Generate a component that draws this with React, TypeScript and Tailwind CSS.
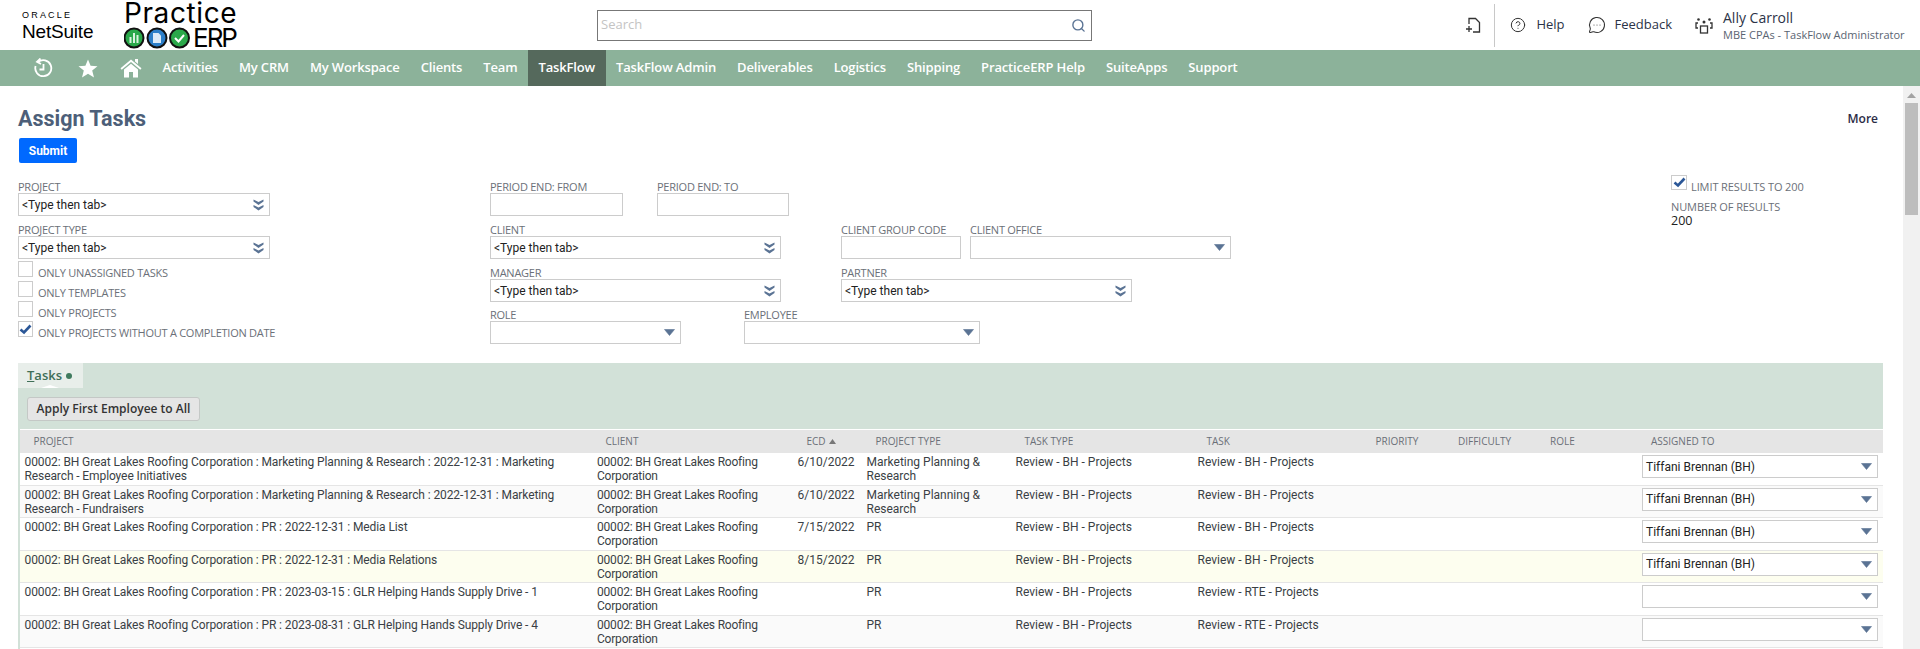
import { CircleHelp, MessageCircleMore, Search } from 'lucide-react'

const navItems = ['Activities', 'My CRM', 'My Workspace', 'Clients', 'Team', 'TaskFlow', 'TaskFlow Admin', 'Deliverables', 'Logistics', 'Shipping', 'PracticeERP Help', 'SuiteApps', 'Support']

const projectBase = '00002: BH Great Lakes Roofing Corporation : '
const rows = [
  { project: projectBase + 'Marketing Planning & Research : 2022-12-31 : Marketing Research - Employee Initiatives', ecd: '6/10/2022', type: 'Marketing Planning & Research', task: 'Review - BH - Projects', assigned: 'Tiffani Brennan (BH)', bg: 'bg-white' },
  { project: projectBase + 'Marketing Planning & Research : 2022-12-31 : Marketing Research - Fundraisers', ecd: '6/10/2022', type: 'Marketing Planning & Research', task: 'Review - BH - Projects', assigned: 'Tiffani Brennan (BH)', bg: 'bg-[#fafafa]' },
  { project: projectBase + 'PR : 2022-12-31 : Media List', ecd: '7/15/2022', type: 'PR', task: 'Review - BH - Projects', assigned: 'Tiffani Brennan (BH)', bg: 'bg-white' },
  { project: projectBase + 'PR : 2022-12-31 : Media Relations', ecd: '8/15/2022', type: 'PR', task: 'Review - BH - Projects', assigned: 'Tiffani Brennan (BH)', bg: 'bg-[#fdfeef]' },
  { project: projectBase + 'PR : 2023-03-15 : GLR Helping Hands Supply Drive - 1', ecd: '', type: 'PR', task: 'Review - RTE - Projects', assigned: '', bg: 'bg-white' },
  { project: projectBase + 'PR : 2023-08-31 : GLR Helping Hands Supply Drive - 4', ecd: '', type: 'PR', task: 'Review - RTE - Projects', assigned: '', bg: 'bg-[#fafafa]' },
]

const gridCols = 'grid grid-cols-[572px_201px_69px_149px_182px_169px_82.5px_92px_101px_245.5px]'

function DoubleArrow() {
  return (
    <svg width="11" height="12" viewBox="0 0 11 12" className="shrink-0" fill="#5a7394">
      <path d="M0.5 0.5 L5.5 3 L10.5 0.5 L10.5 2.5 L5.5 6 L0.5 2.5 Z" />
      <path d="M0.5 6 L5.5 8.5 L10.5 6 L10.5 8 L5.5 11.5 L0.5 8 Z" />
    </svg>
  )
}

function Arrow() {
  return (
    <svg width="11" height="7" viewBox="0 0 11 7" className="shrink-0" fill="#5a7394">
      <path d="M0.5 0.5 H10.5 L5.5 6.5 Z" stroke="#5a7394" strokeLinejoin="round" strokeWidth="0.6" />
    </svg>
  )
}

function Label({ children }: { children: string }) {
  return <div className="h-[13px] text-[11px] leading-[13px] tracking-[-0.25px] text-[#6b7078] whitespace-nowrap">{children}</div>
}

function TextField({ label, w }: { label: string; w: string }) {
  return (
    <div className={w}>
      <Label>{label}</Label>
      <div className="h-[23px] border border-[#cccccc] bg-white" />
    </div>
  )
}

function SelectField({ label, w, double }: { label: string; w: string; double?: boolean }) {
  return (
    <div className={w}>
      <Label>{label}</Label>
      <div className="h-[23px] border border-[#cccccc] bg-white flex items-center justify-between pl-[3px] pr-[5px] font-['Roboto',sans-serif] text-[12px] text-[#222222]">
        <span>{double ? '<Type then tab>' : ''}</span>
        {double ? <DoubleArrow /> : <Arrow />}
      </div>
    </div>
  )
}

function Check({ label, checked }: { label: string; checked?: boolean }) {
  return (
    <div className="h-5 flex items-start gap-[5px]">
      <div className="w-[15px] h-4 border border-[#cccccc] bg-white flex items-center justify-center">
        {checked && (
          <svg width="13" height="11" viewBox="0 0 13 11">
            <path d="M1.5 5.5 L5 8.5 L11.5 1.5" stroke="#2b5797" strokeWidth="2.6" fill="none" />
          </svg>
        )}
      </div>
      <span className="mt-[5px] text-[11px] leading-[14px] tracking-[-0.25px] text-[#6b7078] whitespace-nowrap">{label}</span>
    </div>
  )
}

function PracticeLogo() {
  return (
    <div className="ml-[31px] w-[112px] h-[50px] text-black font-['Inter',sans-serif] flex flex-col">
      <div className="h-[27px] text-[28px] leading-[27px] tracking-[0.6px] font-normal whitespace-nowrap">Practice</div>
      <div className="flex items-center h-[22px]">
        <svg width="69" height="22" viewBox="0 0 69 22" className="shrink-0">
          <circle cx="10" cy="11" r="9.5" fill="#2aa84a" stroke="#111" strokeWidth="2" />
          <rect x="5.5" y="10" width="2" height="6" fill="#d9f2df" />
          <rect x="9" y="6" width="2" height="10" fill="#d9f2df" />
          <rect x="12.5" y="8" width="2" height="8" fill="#d9f2df" />
          <circle cx="33" cy="11" r="9.5" fill="#2c7fc9" stroke="#111" strokeWidth="2" />
          <path d="M29 6 H34.5 L37 8.5 V16 H29 Z" fill="#dcebf8" />
          <circle cx="55.5" cy="11" r="9.5" fill="#2aa84a" stroke="#111" strokeWidth="2" />
          <path d="M51 11 L54.5 14.5 L60 8" stroke="#fff" strokeWidth="2" fill="none" />
        </svg>
        <span className="text-[26px] leading-[22px] tracking-[-2px] font-normal">ERP</span>
      </div>
    </div>
  )
}

function TopBar() {
  return (
    <div className="h-[50px] flex items-center bg-white">
      <div className="ml-[22px] w-[71px] mt-[2px] text-black font-['Liberation_Sans',sans-serif]">
        <div className="text-[9px] leading-[9px] tracking-[2.2px]">ORACLE</div>
        <div className="mt-[2px] text-[19px] leading-[20px] tracking-[-0.2px]">NetSuite</div>
      </div>
      <PracticeLogo />
      <div className="ml-[361px] w-[495px] h-[31px] border border-[#777777] flex items-center justify-between pl-[3px] pr-[5px]">
        <span className="text-[13px] text-[#c4c4c4]">Search</span>
        <Search size={15} color="#5a7394" strokeWidth={2.2} />
      </div>
      <div className="ml-auto flex items-center h-[50px] text-[#2b3347]">
        <svg width="16" height="17" viewBox="0 0 16 17" fill="none" stroke="#333" strokeWidth="1.3">
          <path d="M4 7 V1.5 H10.5 L14.5 5.5 V15 H8" />
          <path d="M4 9 V15 M1 12 H7" />
        </svg>
        <div className="ml-[13px] w-px h-[43px] bg-[#c8c8c8]" />
        <CircleHelp className="ml-[15px]" size={16} strokeWidth={1.5} color="#333" />
        <span className="ml-[10px] text-[13px]">Help</span>
        <MessageCircleMore className="ml-[23px]" size={18} strokeWidth={1.4} color="#333" />
        <span className="ml-[9px] text-[13px]">Feedback</span>
        <svg className="ml-[23px]" width="18" height="17" viewBox="0 0 18 17" fill="none" stroke="#333" strokeWidth="1.3">
          <circle cx="3.5" cy="2.5" r="1.3" fill="#333" stroke="none" />
          <circle cx="9" cy="5" r="1.5" fill="#333" stroke="none" />
          <circle cx="14.5" cy="2.5" r="1.3" fill="#333" stroke="none" />
          <path d="M3 6 H1 V11 H3 M15 6 H17 V11 H15" />
          <rect x="5.5" y="9" width="7" height="7" />
        </svg>
        <div className="ml-[10px] w-[197px]">
          <div className="text-[14px] leading-[18px] text-[#2b3347]">Ally Carroll</div>
          <div className="text-[11px] leading-[15px] text-[#5a6472] whitespace-nowrap">MBE CPAs - TaskFlow Administrator</div>
        </div>
      </div>
    </div>
  )
}

function NavBar() {
  return (
    <div className="h-9 bg-[#8cb29a] flex items-center text-white">
      <svg className="ml-[33px]" width="20" height="20" viewBox="0 0 20 20" fill="none" stroke="#fff" strokeWidth="1.8">
        <path d="M5 4.2 A8 8 0 1 1 2.6 8" />
        <path d="M7.5 0.5 L4 3.8 L8 6" />
        <path d="M10.5 6 V11.5 H6.5" />
      </svg>
      <svg className="ml-[25px]" width="20" height="19" viewBox="0 0 20 19" fill="#fff">
        <path d="M10 0.5 L12.6 6.8 L19.5 7.2 L14.2 11.6 L16 18.5 L10 14.8 L4 18.5 L5.8 11.6 L0.5 7.2 L7.4 6.8 Z" />
      </svg>
      <svg className="ml-[22px]" width="22" height="20" viewBox="0 0 22 20" fill="#fff">
        <path d="M15 1 H18 V6 L15 3.5 Z" />
        <path d="M11 1.5 L21.5 10.2 L20.3 11.8 L11 4 L1.7 11.8 L0.5 10.2 Z" />
        <path d="M4 11.5 L11 5.8 L18 11.5 V19.5 H13 V14 H9 V19.5 H4 Z" />
      </svg>
      <div className="ml-[10px] flex h-full font-['Open_Sans',sans-serif] text-[13px] tracking-[-0.15px] font-semibold">
        {navItems.map((item) => (
          <div key={item} className={`flex items-center px-[10.5px] whitespace-nowrap ${item === 'TaskFlow' ? 'bg-[#55695c]' : ''}`}>
            {item}
          </div>
        ))}
      </div>
    </div>
  )
}

function FilterForm() {
  return (
    <div className="mt-[17px] flex">
      <div className="w-[252px] shrink-0 flex flex-col">
        <SelectField label="PROJECT" w="w-full" double />
        <div className="h-[7px]" />
        <SelectField label="PROJECT TYPE" w="w-full" double />
        <div className="h-[2px]" />
        <Check label="ONLY UNASSIGNED TASKS" />
        <Check label="ONLY TEMPLATES" />
        <Check label="ONLY PROJECTS" />
        <Check label="ONLY PROJECTS WITHOUT A COMPLETION DATE" checked />
      </div>
      <div className="ml-[220px] w-[741px] shrink-0 flex flex-col gap-[7px]">
        <div className="flex gap-[34px]">
          <TextField label="PERIOD END: FROM" w="w-[133px]" />
          <TextField label="PERIOD END: TO" w="w-[132px]" />
        </div>
        <div className="flex">
          <SelectField label="CLIENT" w="w-[291px]" double />
          <TextField label="CLIENT GROUP CODE" w="ml-[60px] w-[120px]" />
          <SelectField label="CLIENT OFFICE" w="ml-[9px] w-[261px]" />
        </div>
        <div className="flex">
          <SelectField label="MANAGER" w="w-[291px]" double />
          <SelectField label="PARTNER" w="ml-[60px] w-[291px]" double />
        </div>
        <div className="flex -mt-px">
          <SelectField label="ROLE" w="w-[191px]" />
          <SelectField label="EMPLOYEE" w="ml-[63px] w-[236px]" />
        </div>
      </div>
      <div className="ml-[440px] flex flex-col">
        <div className="-mt-[5px] flex items-start gap-[4px]">
          <div className="w-4 h-[15px] border border-[#cccccc] bg-white flex items-center justify-center">
            <svg width="13" height="11" viewBox="0 0 13 11">
              <path d="M1.5 5.5 L5 8.5 L11.5 1.5" stroke="#2b5797" strokeWidth="2.6" fill="none" />
            </svg>
          </div>
          <span className="mt-[5px] text-[11px] leading-[14px] tracking-[-0.1px] text-[#6b7078] whitespace-nowrap">LIMIT RESULTS TO 200</span>
        </div>
        <div className="mt-[6px] text-[11px] leading-[14px] tracking-[-0.1px] text-[#6b7078] whitespace-nowrap">NUMBER OF RESULTS</div>
        <div className="text-[12.5px] leading-[13px] text-[#222222]">200</div>
      </div>
    </div>
  )
}

function HeaderCell({ children }: { children?: React.ReactNode }) {
  return <div className="pl-[13.5px] text-[10px] text-[#6b7078] flex items-center gap-[3px]">{children}</div>
}

function TasksPanel() {
  return (
    <div className="mt-[19px] w-[1865px] bg-[#d2e1d8] pl-[2px] flex flex-col">
      <div className="-ml-[2px] relative w-[65px] h-[25px] bg-[#e8eeea] flex items-center pl-[9px] gap-[4px] font-['Open_Sans',sans-serif] text-[13px] font-semibold text-[#3f6f58]">
        <span><span className="underline">T</span>asks</span>
        <span className="w-[6px] h-[6px] rounded-full bg-[#3f7a5e]" />
        <div className="absolute left-[23px] bottom-0 w-0 h-0 border-x-[9px] border-x-transparent border-b-[3px] border-b-white" />
      </div>
      <div className="h-[41px] flex items-center pl-[7px]">
        <button className="w-[173px] h-6 bg-[#e5e5e5] border border-[#c4c8c6] rounded-[3px] text-[12px] font-semibold text-[#333333] font-['Open_Sans',sans-serif]">
          Apply First Employee to All
        </button>
      </div>
      <div className="border-t border-white bg-white">
        <div className={`${gridCols} h-[23px] bg-[#e5e5e5]`}>
          <HeaderCell>PROJECT</HeaderCell>
          <HeaderCell>CLIENT</HeaderCell>
          <HeaderCell>
            ECD
            <svg width="7" height="5" viewBox="0 0 7 5" fill="#777"><path d="M3.5 0 L7 5 H0 Z" /></svg>
          </HeaderCell>
          <HeaderCell>PROJECT TYPE</HeaderCell>
          <HeaderCell>TASK TYPE</HeaderCell>
          <HeaderCell>TASK</HeaderCell>
          <HeaderCell>PRIORITY</HeaderCell>
          <HeaderCell>DIFFICULTY</HeaderCell>
          <HeaderCell>ROLE</HeaderCell>
          <HeaderCell>ASSIGNED TO</HeaderCell>
        </div>
        {rows.map((row, i) => (
          <div key={i} className={`${gridCols} h-[32.5px] ${row.bg} border-b border-[#e5e5e5] font-['Roboto',sans-serif] text-[12px] leading-[14px] text-[#3a3f45] overflow-hidden`}>
            <div className="pl-[4.5px] pr-4 pt-[2px] tracking-[-0.1px]">{row.project}</div>
            <div className="pl-[5px] pr-4 pt-[2px] tracking-[-0.2px]">00002: BH Great Lakes Roofing Corporation</div>
            <div className="pl-[4.5px] pt-[2px]">{row.ecd}</div>
            <div className="pl-[4.5px] pr-4 pt-[2px]">{row.type}</div>
            <div className="pl-[4.5px] pt-[2px]">Review - BH - Projects</div>
            <div className="pl-[4.5px] pt-[2px]">{row.task}</div>
            <div />
            <div />
            <div />
            <div className="pl-[4.5px] pr-[5px] pt-[2px]">
              <div className="h-[23px] border border-[#cccccc] bg-white flex items-center justify-between pl-[3px] pr-[5px] text-[#222222]">
                <span>{row.assigned}</span>
                <Arrow />
              </div>
            </div>
          </div>
        ))}
        <div className="h-[32.5px] bg-white" />
      </div>
    </div>
  )
}

export default function App() {
  return (
    <div className="h-[649px] w-[1920px] overflow-hidden bg-white font-['Open_Sans',sans-serif]">
      <TopBar />
      <NavBar />
      <div className="flex h-[563px]">
        <div className="w-[1903px] shrink-0 pl-[18px] pt-[21px] overflow-hidden">
          <div className="flex items-start justify-between pr-[25px]">
            <div className="font-['Roboto',sans-serif] text-[21.5px] leading-[24px] font-bold text-[#4d5f79]">Assign Tasks</div>
            <div className="mt-[4px] text-[12px] leading-[16px] font-semibold text-[#2b2b45]">More</div>
          </div>
          <button className="mt-[7px] ml-px block w-[58px] h-[25px] rounded-[2px] bg-[#0069ff] text-white text-[12px] font-bold font-['Roboto',sans-serif]">Submit</button>
          <FilterForm />
          <TasksPanel />
        </div>
        <div className="w-[17px] shrink-0 bg-[#f1f1f1] flex flex-col items-center">
          <svg className="mt-[7px]" width="9" height="5" viewBox="0 0 9 5" fill="#a3a3a3"><path d="M4.5 0 L9 5 H0 Z" /></svg>
          <div className="mt-[5px] w-[13px] h-[112px] bg-[#bdbdbd]" />
        </div>
      </div>
    </div>
  )
}
